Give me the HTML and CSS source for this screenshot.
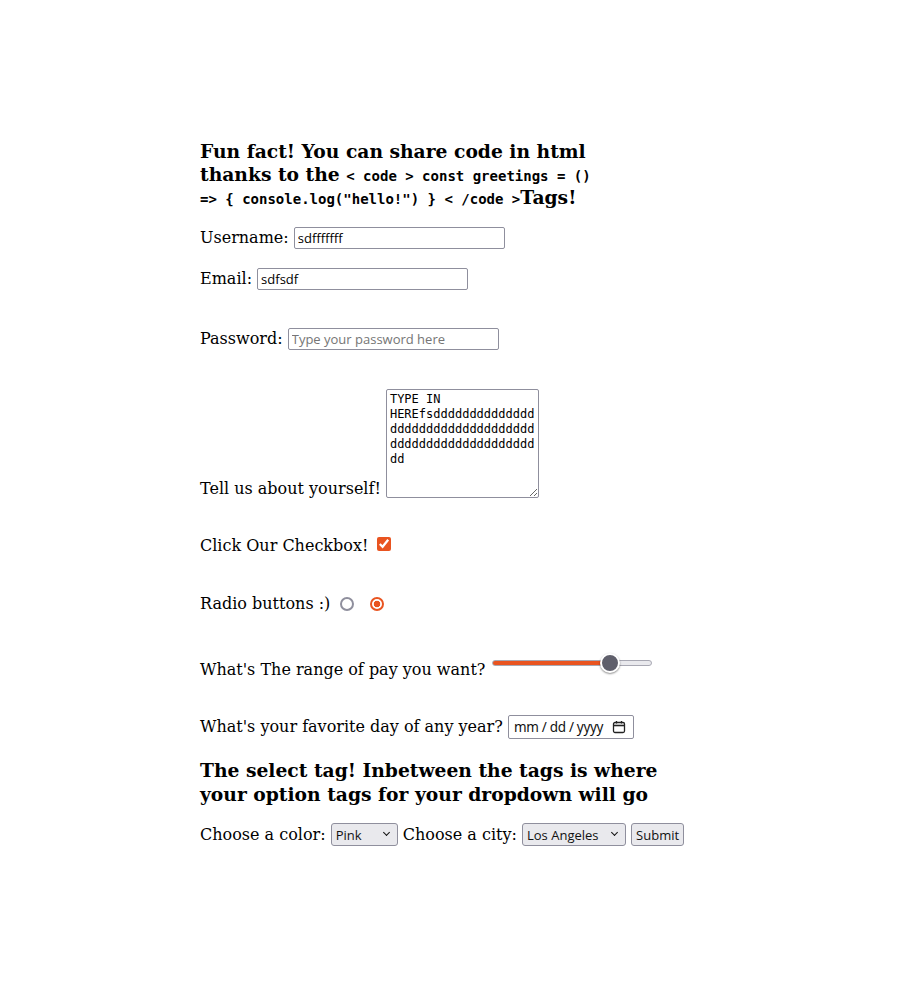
FILE: index.html
```html
<!DOCTYPE html>
<html lang="en">
<head>
<meta charset="utf-8">
<title>Form</title>
<link rel="stylesheet" href="styles.css">
</head>
<body>
<main class="page">
  <h3 class="fact">Fun fact! You can share code in html thanks to the <code class="snippet">&lt; code &gt; const greetings = () =&gt; { console.log("hello!") } &lt; /code &gt;</code>Tags!</h3>
  <form class="form">
    <div class="row row-user"><label for="u">Username:</label> <input id="u" class="text" type="text" value="sdfffffff"></div>
    <div class="row row-email"><label for="e">Email:</label> <input id="e" class="text" type="email" value="sdfsdf"></div>
    <div class="row row-pass"><label for="p">Password:</label> <input id="p" class="text" type="password" placeholder="Type your password here"></div>
    <div class="row row-about"><label for="t">Tell us about yourself!</label> <textarea id="t" class="about">TYPE IN HEREfsdddddddddddddddddddddddddddddddddddddddddddddddddddddddd</textarea></div>
    <div class="row row-check"><label for="c">Click Our Checkbox!</label> <input id="c" class="check" type="checkbox" checked></div>
    <div class="row row-radio"><label>Radio buttons :)</label> <input class="radio" type="radio" name="r"> <input class="radio" type="radio" name="r" checked></div>
    <div class="row row-range"><label for="g">What's The range of pay you want?</label> <input id="g" class="range" type="range" min="0" max="100" value="77"></div>
    <div class="row row-date"><label>What's your favorite day of any year?</label> <span class="date" role="textbox"><span class="date-text">mm / dd / yyyy</span><svg class="cal" width="14" height="14" viewBox="0 0 14 14" aria-hidden="true"><rect x="1.5" y="2.5" width="11" height="10" rx="1.5" fill="none" stroke="#222" stroke-width="1.3"/><path d="M1.5 5.5h11" stroke="#222" stroke-width="1.6"/><path d="M4.5 1v2.5M9.5 1v2.5" stroke="#222" stroke-width="1.3"/></svg></span></div>
    <h3 class="select-title">The select tag! Inbetween the tags is where your option tags for your dropdown will go</h3>
    <div class="row row-select">
      <label for="col">Choose a color:</label>
      <span class="sel-wrap"><select id="col" class="sel sel-color"><option>Pink</option><option>Blue</option><option>Green</option></select></span>
      <label for="city">Choose a city:</label>
      <span class="sel-wrap"><select id="city" class="sel sel-city"><option>Los Angeles</option><option>New York</option></select></span>
      <button type="submit" class="submit">Submit</button>
    </div>
  </form>
</main>
</body>
</html>
```

FILE: styles.css
```css
html, body {
  margin: 0;
  padding: 0;
  background: #ffffff;
}

body {
  font-family: "DejaVu Serif", serif;
  font-size: 16px;
  color: #000000;
}

.page {
  margin-left: 200px;
  padding-top: 140px;
  width: 500px;
}

.fact {
  width: 400px;
  margin: 0 0 18px 0;
  font-size: 18.72px;
  line-height: 23px;
  font-weight: bold;
}

.snippet {
  font-family: "DejaVu Sans Mono", monospace;
  font-size: 14px;
  line-height: 16px;
  font-weight: bold;
}

.form {
  margin: 0;
}

.row {
  margin: 0;
}

.row-user { margin-bottom: 19px; }
.row-email { margin-bottom: 38px; }
.row-pass { margin-bottom: 39px; }
.row-about { margin-bottom: 38px; }
.row-check { margin-bottom: 39px; }
.row-radio { margin-bottom: 40px; }
.row-range { margin-bottom: 36px; }
.row-date { margin-bottom: 0; }

.text {
  width: 211px;
  height: 22px;
  box-sizing: border-box;
  font-family: "Open Sans", "Noto Sans", sans-serif;
  font-size: 13px;
  padding: 1px 3px;
  border: 1px solid #8f8f9d;
  border-radius: 2px;
  margin: 0;
}

.text::placeholder {
  color: #757575;
}

.about {
  width: 153px;
  height: 109px;
  box-sizing: border-box;
  padding: 2px 3px;
  border: 1px solid #8f8f9d;
  border-radius: 2px;
  font-family: "DejaVu Sans Mono", monospace;
  font-size: 12px;
  line-height: 15px;
  margin: 0;
  vertical-align: -4px;
}

.check {
  accent-color: #e95420;
  width: 14px;
  height: 14px;
  margin: 0 0 0 4px;
}

.radio {
  appearance: none;
  -webkit-appearance: none;
  box-sizing: border-box;
  width: 14px;
  height: 14px;
  border: 2px solid #8f8f9d;
  border-radius: 50%;
  background: #ffffff;
  margin: 0 5px 0 5px;
  vertical-align: -2px;
}

.radio:checked {
  border-color: #e95420;
  background: radial-gradient(circle, #e95420 0 3px, #ffffff 3.6px);
}

.range {
  appearance: none;
  -webkit-appearance: none;
  width: 160px;
  height: 20px;
  background: transparent;
  margin: 0 2px;
  vertical-align: 2px;
}

.range::-webkit-slider-runnable-track {
  height: 6px;
  border-radius: 4px;
  border: 1px solid #a8a8b3;
  background: linear-gradient(to right, #e95420 0 74%, #e9e9ed 74% 100%);
}

.range::-webkit-slider-thumb {
  -webkit-appearance: none;
  appearance: none;
  width: 20px;
  height: 20px;
  border-radius: 50%;
  background: #5f5f6b;
  border: 2px solid #ffffff;
  box-sizing: border-box;
  box-shadow: 0 1px 2px rgba(0, 0, 0, 0.45);
  margin-top: -8px;
}

.date {
  display: inline-flex;
  align-items: center;
  justify-content: space-between;
  width: 126px;
  height: 24px;
  box-sizing: border-box;
  font-family: "Noto Sans", "Open Sans", sans-serif;
  font-size: 13.5px;
  color: #111;
  border: 1px solid #8f8f9d;
  border-radius: 2px;
  padding: 0 7px 0 5px;
  vertical-align: baseline;
  background: #fff;
}

.date-text {
  letter-spacing: -0.3px;
}

.cal {
  flex: none;
}

.select-title {
  width: 480px;
  margin: 19px 0 17px 0;
  font-size: 18.72px;
  line-height: 24px;
  font-weight: bold;
}

.sel-wrap {
  position: relative;
  display: inline-block;
}

.sel-wrap::after {
  content: "";
  position: absolute;
  right: 9px;
  top: 7px;
  width: 4px;
  height: 4px;
  border-right: 1.6px solid #111;
  border-bottom: 1.6px solid #111;
  transform: rotate(45deg);
  pointer-events: none;
}

.sel {
  appearance: none;
  -webkit-appearance: none;
  height: 23px;
  box-sizing: border-box;
  font-family: "Open Sans", "Noto Sans", sans-serif;
  font-size: 13px;
  color: #111;
  border: 1px solid #8f8f9d;
  border-radius: 3px;
  background: #e9e9ed;
  padding: 0 18px 0 4px;
  margin: 0;
}

.sel-color { width: 67px; }
.sel-city { width: 104px; }

.submit {
  height: 23px;
  box-sizing: border-box;
  font-family: "Open Sans", "Noto Sans", sans-serif;
  font-size: 13px;
  color: #111;
  border: 1px solid #8f8f9d;
  border-radius: 3px;
  background: #e9e9ed;
  padding: 0 4px;
  margin: 0;
}
```
